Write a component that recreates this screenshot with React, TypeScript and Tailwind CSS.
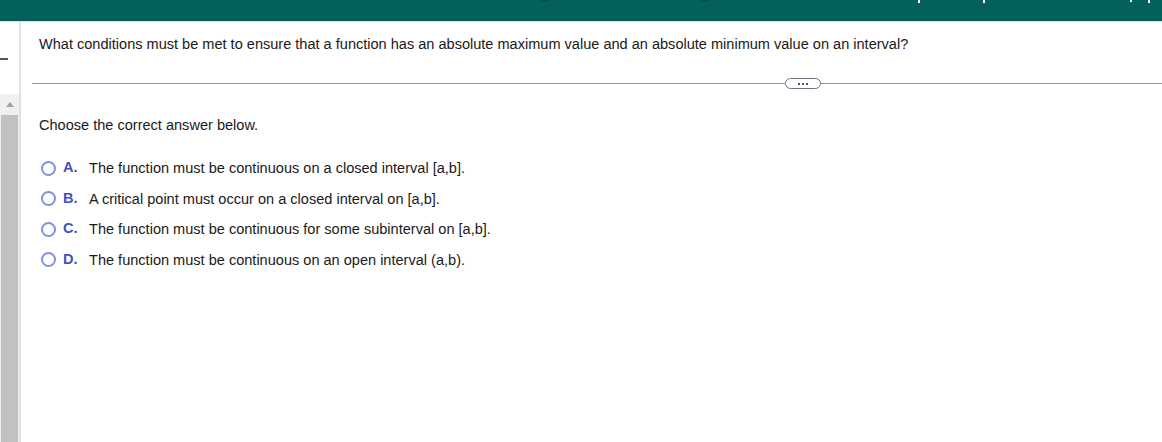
import React from "react";

const options = [
  { key: "A.", text: "The function must be continuous on a closed interval [a,b]." },
  { key: "B.", text: "A critical point must occur on a closed interval on [a,b]." },
  { key: "C.", text: "The function must be continuous for some subinterval on [a,b]." },
  { key: "D.", text: "The function must be continuous on an open interval (a,b)." },
];

export default function App() {
  return (
    <div
      className="flex h-[442px] w-[1162px] flex-col overflow-hidden bg-white text-[14.55px] text-[#1a1a1a]"
      style={{ fontFamily: '"Liberation Sans", Arial, sans-serif' }}
    >
      {/* top bar */}
      <div className="relative h-[21px] shrink-0 bg-[#03605a]">
        <span className="absolute left-[537px] top-[-14px] h-[16px] w-[16px] rounded-full bg-[#0b4d48]" />
        <span className="absolute left-[697px] top-[-14px] h-[16px] w-[16px] rounded-full bg-[#0b4d48]" />
        <span className="absolute left-[918px] top-0 h-[3px] w-[2px] bg-white" />
        <span className="absolute left-[983px] top-0 h-[3px] w-[2px] bg-white" />
        <span className="absolute left-[1130px] top-0 h-[2px] w-[2px] bg-white" />
        <span className="absolute left-[1148px] top-0 h-[3px] w-[2px] bg-white" />
      </div>
      <div className="h-px shrink-0 bg-[#dfe7e6]" />

      <div className="flex min-h-0 flex-1">
        {/* left rail */}
        <div className="flex w-[19px] shrink-0 flex-col">
          <div className="h-[72px] pt-[36px]">
            <div className="h-[2px] w-[8px] bg-[#555]" />
          </div>
          <div className="flex flex-1 flex-col bg-[#f0f0f0]">
            <div className="flex h-[21px] items-center justify-center">
              <div className="h-0 w-0 border-x-[4px] border-b-[5px] border-x-transparent border-b-[#a3a3a3]" />
            </div>
            <div className="ml-px mr-px flex-1 bg-[#c1c1c1]" />
          </div>
        </div>
        <div className="w-[2px] shrink-0 bg-[#dde3ee]" />

        {/* content */}
        <div className="flex min-w-0 flex-1 flex-col pl-[11px]">
          <p className="pl-[7px] pt-[14px] leading-[16px]">
            What conditions must be met to ensure that a function has an absolute maximum value and an absolute minimum value on an interval?
          </p>

          <div className="mt-[26px] flex items-center">
            <div className="h-px w-[753px] bg-[#8e939b]" />
            <div className="flex h-[11px] w-[36px] items-center justify-center gap-[2px] rounded-full border border-[#6b7380] bg-white">
              <span className="h-[2px] w-[2px] bg-[#4b5563]" />
              <span className="h-[2px] w-[2px] bg-[#4b5563]" />
              <span className="h-[2px] w-[2px] bg-[#4b5563]" />
            </div>
            <div className="h-px flex-1 bg-[#8e939b]" />
          </div>

          <p className="pl-[7px] pt-[28px] leading-[16px]">Choose the correct answer below.</p>

          <div className="mt-[27px] flex flex-col gap-[14.67px] pl-[9px]">
            {options.map((o) => (
              <div key={o.key} className="flex h-[16px] items-center">
                <span className="h-[15px] w-[15px] shrink-0 rounded-full border-2 border-[#8092dc] bg-white" />
                <span className="ml-[7px] w-[26px] font-bold text-[#3f51c4]">{o.key}</span>
                <span className="leading-[16px]">{o.text}</span>
              </div>
            ))}
          </div>
        </div>
      </div>
    </div>
  );
}
